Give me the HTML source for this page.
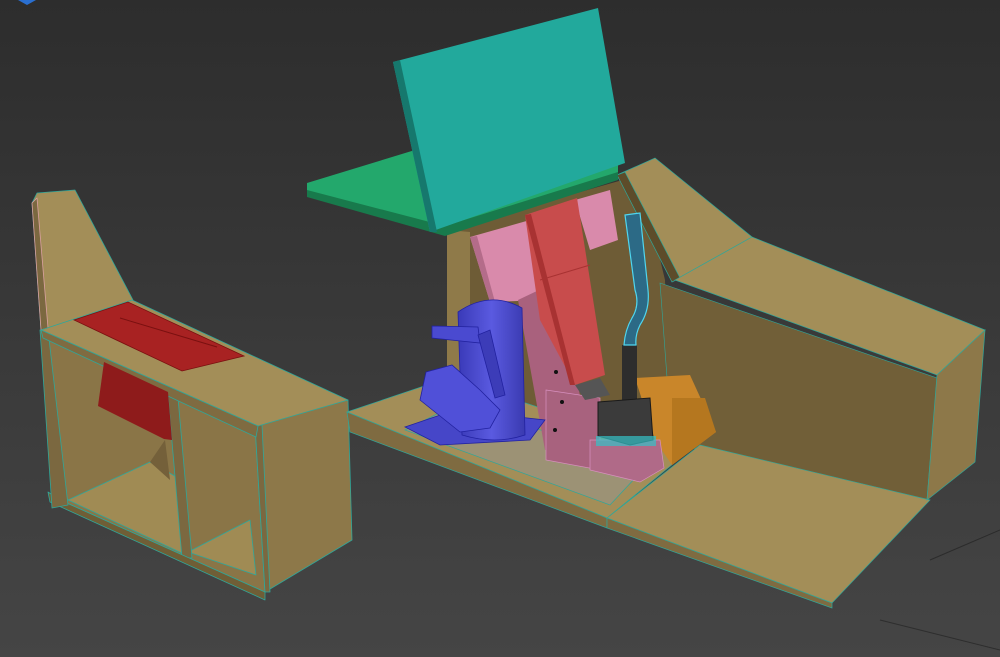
<!DOCTYPE html>
<html><head><meta charset="utf-8"><style>
html,body{margin:0;padding:0;width:1000px;height:657px;overflow:hidden;background:#383838}
svg{display:block}
</style></head><body>
<svg width="1000" height="657" viewBox="0 0 1000 657" xmlns="http://www.w3.org/2000/svg">
<defs>
<linearGradient id="bg" x1="0" y1="0" x2="0" y2="1">
<stop offset="0" stop-color="#2d2d2d"/><stop offset="1" stop-color="#454545"/>
</linearGradient>
<linearGradient id="cyl" x1="0" y1="0" x2="1" y2="0">
<stop offset="0" stop-color="#3a3ab8"/><stop offset="0.5" stop-color="#5a5ae0"/><stop offset="1" stop-color="#3a3ab0"/>
</linearGradient>
</defs>
<rect width="1000" height="657" fill="url(#bg)"/>
<polygon points="18,0 36,0 27,5" fill="#2a6fd0"/>
<g stroke="#1e1e1e" stroke-width="1" fill="none" opacity="0.6">
<line x1="880" y1="620" x2="1000" y2="650"/><line x1="930" y1="560" x2="1000" y2="530"/>
</g>

<!-- LEFT UNIT -->
<g stroke="#2fa79a" stroke-width="0.8" stroke-linejoin="round">
<polygon points="48,330 258,428 265,592 60,500" fill="#8a7547"/>
<polygon points="68,500 150,462 182,480 186,555" fill="#a08b54"/>
<polygon points="150,462 165,440 170,480" fill="#74603a" stroke="none"/>
<polygon points="188,552 250,520 256,575" fill="#a08b54"/>
<polygon points="168,395 178,398 192,558 182,558" fill="#7b6840"/>
<polygon points="48,492 60,500 265,592 265,600 50,502" fill="#6f5e36"/>
<polygon points="40,330 48,330 68,505 52,508" fill="#7b6840"/>
<polygon points="255,425 348,400 352,540 265,592" fill="#8d7849"/>
<polygon points="255,425 262,425 270,592 265,592" fill="#7b6840"/>
<polygon points="32,203 37,193 75,190 133,300 48,328 41,330" fill="#a38e58"/>
<polygon points="32,203 37,198 48,328 41,330" fill="#7b6840" stroke="#d9a0a0"/>
<polygon points="41,330 132,300 348,400 258,426" fill="#a38e58"/>
<polygon points="41,330 258,426 256,437 43,338" fill="#7f6b41"/>
</g>
<polygon points="74,320 128,302 244,356 182,371" fill="#a82222" stroke="#7a1010" stroke-width="0.8"/>
<line x1="120" y1="318" x2="217" y2="347" stroke="#7a1010"/>
<polygon points="104,362 168,392 172,440 164,439 98,406" fill="#8e1b1b"/>

<!-- MAIN UNIT -->
<!-- back walls -->
<polygon points="447,230 640,175 665,280 670,445 600,440 447,420" fill="#6e5c36"/>
<polygon points="447,230 470,232 470,420 447,425" fill="#8f7a49"/>
<polygon points="660,283 937,378 927,500 740,455 672,445" fill="#715f38" stroke="#2fa79a" stroke-width="0.6"/>
<!-- floors -->
<g stroke="#2fa79a" stroke-width="0.7">
<polygon points="347,412 448,378 640,440 690,450 607,518" fill="#a38e58"/>
<polygon points="405,430 455,405 650,462 610,505" fill="#9c9275"/>
<polygon points="347,412 607,518 607,528 350,432" fill="#7f6b41"/>
<polygon points="607,518 700,445 930,500 832,603" fill="#a38e58"/>
<polygon points="607,518 832,603 832,608 607,528" fill="#7f6b41"/>
</g>
<!-- right box -->
<g stroke="#2fa79a" stroke-width="0.7">
<polygon points="617,175 655,158 752,237 675,280" fill="#a38e58"/>
<polygon points="617,175 625,172 680,278 672,282" fill="#5d4c2a"/>
<polygon points="675,280 752,237 985,330 937,375" fill="#a38e58"/>
<polygon points="937,375 985,330 975,462 927,500" fill="#8d7849"/>
</g>
<!-- orange block -->
<polygon points="635,378 690,375 716,432 672,465 655,440" fill="#c9862a"/>
<polygon points="672,398 705,398 716,432 672,465" fill="#b5771f"/>

<!-- seat green shelf -->
<polygon points="307,183 415,150 618,163 618,178 445,233 307,196" fill="#23a86c"/>
<polygon points="307,190 445,226 445,236 307,197" fill="#187a4c"/>
<polygon points="445,226 618,172 618,180 445,236" fill="#187a4c"/>
<!-- teal back -->
<polygon points="393,62 598,8 625,163 430,232" fill="#22a99c"/>
<polygon points="393,62 400,60 437,232 430,232" fill="#16786d"/>

<!-- pink/red column -->
<polygon points="470,237 530,220 543,300 490,302" fill="#d98aab"/>
<polygon points="470,237 477,236 495,302 490,302" fill="#b46c8a"/>
<polygon points="575,200 610,190 618,240 590,250" fill="#d98aab"/>
<polygon points="518,300 560,280 578,385 590,450 545,450" fill="#a9617d"/>
<polygon points="525,215 577,198 605,375 575,385 540,320" fill="#c84c4c"/>
<polygon points="525,215 531,214 575,385 570,385" fill="#a83232"/>
<line x1="540" y1="280" x2="590" y2="265" stroke="#a83232"/>
<!-- pink boxes -->
<polygon points="546,390 600,398 600,470 546,460" fill="#a8627e" stroke="#d890c0" stroke-width="0.7"/>
<polygon points="590,440 660,440 664,468 640,482 590,470" fill="#b06a88" stroke="#d890c0" stroke-width="0.7"/>
<polygon points="575,385 600,378 610,395 585,400" fill="#555"/>
<circle cx="556" cy="372" r="2" fill="#111"/><circle cx="562" cy="402" r="2" fill="#111"/><circle cx="555" cy="430" r="2" fill="#111"/>
<!-- black block -->
<rect x="622" y="345" width="15" height="65" fill="#2d2d2d"/>
<polygon points="598,402 650,398 653,440 630,445 598,436" fill="#3b3b3b" stroke="#1a1a1a"/>
<rect x="596" y="436" width="60" height="10" fill="#34c2c8" opacity="0.7"/>
<!-- cyan hose -->
<path d="M625 215 L640 213 L648 290 Q650 310 640 325 Q635 335 636 345 L624 345 Q625 330 632 318 Q640 305 635 290 Z" fill="#2c6a86" stroke="#4fd6ef" stroke-width="1.2"/>

<!-- blue figure -->
<g stroke="#2222a0" stroke-width="0.8">
<polygon points="405,427 455,410 545,420 530,440 440,445" fill="#4646c8"/>
<path d="M458 312 Q490 290 522 308 L525 435 Q495 445 462 435 Z" fill="url(#cyl)"/>
<polygon points="432,326 478,327 480,343 432,338" fill="#4a4ad0"/>
<polygon points="426,372 452,365 480,390 500,410 490,428 460,432 420,400" fill="#5050d8"/>
<polygon points="478,335 490,330 505,395 495,398" fill="#3c3cb8"/>
</g>
</svg>
</body></html>
